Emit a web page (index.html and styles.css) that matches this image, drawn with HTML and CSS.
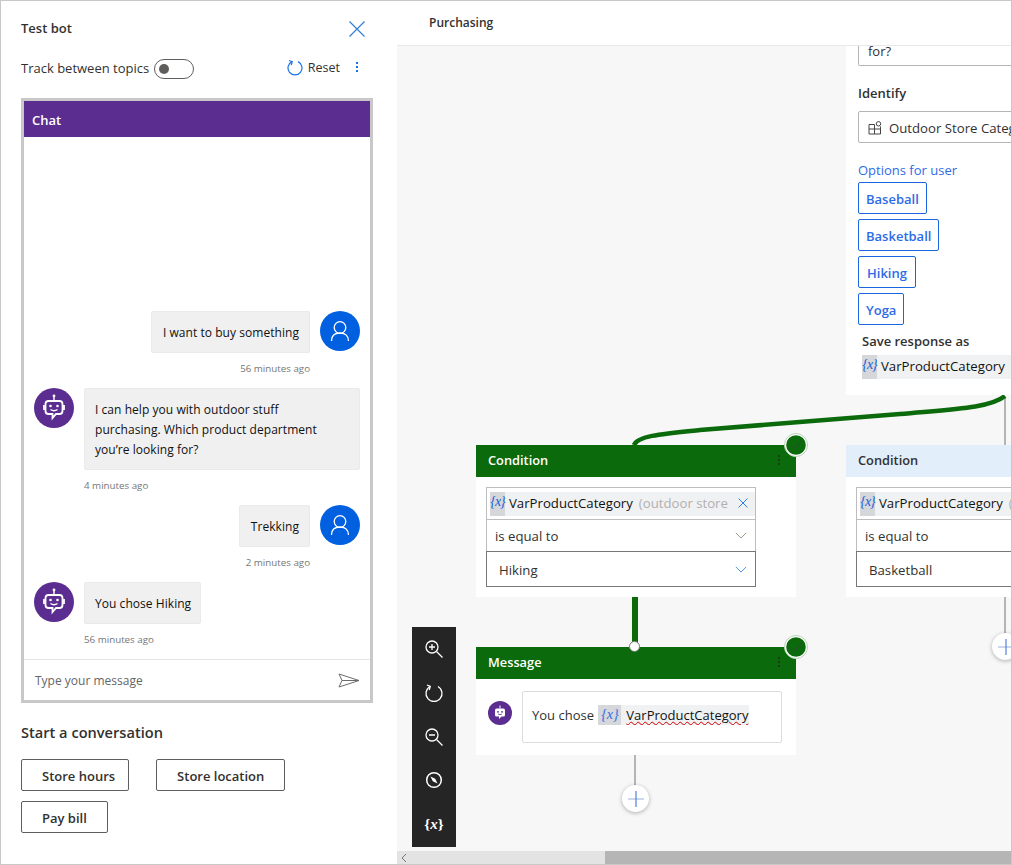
FILE: index.html
```html
<!DOCTYPE html>
<html lang="en">
<head>
    <meta charset="UTF-8">
    <title>Test bot - Purchasing</title>
    <link rel="stylesheet" href="styles.css">
</head>
<body>
    <svg class="defs" width="0" height="0" aria-hidden="true">
        <symbol id="bot" viewBox="0 0 40 40">
            <circle cx="20" cy="20" r="20" fill="#5c2d91"/>
            <path d="M20 8.500v4.500" stroke="#fff" stroke-width="1.400" fill="none"/>
            <circle cx="20" cy="8" r="1.400" fill="#fff"/>
            <path d="M14.500 13h11a3 3 0 0 1 3 3v7a3 3 0 0 1-3 3h-3.500l-3.500 4v-4h-4a3 3 0 0 1-3-3v-7a3 3 0 0 1 3-3z" fill="none" stroke="#fff" stroke-width="1.800"/>
            <path d="M10 17v5M30 17v5" stroke="#fff" stroke-width="1.800" fill="none"/>
            <circle cx="16.500" cy="18" r="1.300" fill="#fff"/>
            <circle cx="23.500" cy="18" r="1.300" fill="#fff"/>
            <path d="M16.500 21.500q3.500 2.500 7 0" stroke="#fff" stroke-width="1.300" fill="none"/>
        </symbol>
        <symbol id="bot-solid" viewBox="0 0 24 24">
            <circle cx="12" cy="12" r="12" fill="#5c2d91"/>
            <path d="M12 4.500v3" stroke="#fff" stroke-width="1" fill="none"/>
            <path d="M8.500 7.500h7a1.500 1.500 0 0 1 1.500 1.500v5a1.500 1.500 0 0 1-1.500 1.500h-2L11 18v-2.500H8.500A1.500 1.500 0 0 1 7 14V9a1.500 1.500 0 0 1 1.500-1.500z" fill="#fff"/>
            <circle cx="10" cy="10.800" r="0.900" fill="#5c2d91"/>
            <circle cx="14" cy="10.800" r="0.900" fill="#5c2d91"/>
            <path d="M10 13q2 1.300 4 0" stroke="#5c2d91" stroke-width="0.800" fill="none"/>
        </symbol>
        <symbol id="user" viewBox="0 0 40 40">
            <circle cx="20" cy="20" r="20" fill="#0060e0"/>
            <circle cx="20" cy="16.500" r="5.800" fill="none" stroke="#fff" stroke-width="1.300"/>
            <path d="M11.500 30c0-5.500 3.500-8 8.500-8s8.500 2.500 8.500 8" fill="none" stroke="#fff" stroke-width="1.300"/>
        </symbol>
        <symbol id="check" viewBox="0 0 24 24">
            <circle cx="12" cy="12" r="11.500" fill="#fff" stroke="#b9d3b9" stroke-width="1"/>
            <circle cx="12" cy="12" r="9.800" fill="#0b6a0b"/>
            <path d="M6.500 12.500l4 4 7.500-9" fill="none" stroke="#2f4a2f" stroke-width="1"/>
        </symbol>
        <symbol id="chevron" viewBox="0 0 14 8">
            <path d="M1 1l6 6 6-6" fill="none" stroke="currentColor" stroke-width="1"/>
        </symbol>
    </svg>

    <div class="app">
        <aside class="test-panel">
            <div class="panel-title">
                <h1>Test bot</h1>
                <svg class="close-icon" width="16" height="16" viewBox="0 0 16 16"><path d="M0.500 0.500l15 15M15.500 0.500l-15 15" stroke="#2f7fd8" stroke-width="1.200" fill="none"/></svg>
            </div>
            <div class="panel-tools">
                <span class="track-label">Track between topics</span>
                <span class="toggle"><span class="toggle-knob"></span></span>
                <span class="reset">
                    <svg width="16" height="17" viewBox="0 0 16 17"><path d="M5 2.600A7 7 0 1 0 11 2.600" fill="none" stroke="#1a73e8" stroke-width="1.200"/><path d="M2 1.500l3.200 1.100L4.300 6" fill="none" stroke="#1a73e8" stroke-width="1.200"/></svg>
                    Reset
                </span>
                <span class="kebab"><i></i><i></i><i></i></span>
            </div>

            <section class="chat">
                <div class="chat-head">Chat</div>
                <div class="chat-log">
                    <div class="msg msg-user">
                        <div class="bubble">I want to buy something</div>
                        <svg class="avatar"><use href="#user"/></svg>
                    </div>
                    <div class="stamp stamp-user">56 minutes ago</div>
                    <div class="msg">
                        <svg class="avatar"><use href="#bot"/></svg>
                        <div class="bubble bubble-wide">I can help you with outdoor stuff purchasing. Which product department you’re looking for?</div>
                    </div>
                    <div class="stamp">4 minutes ago</div>
                    <div class="msg msg-user">
                        <div class="bubble">Trekking</div>
                        <svg class="avatar"><use href="#user"/></svg>
                    </div>
                    <div class="stamp stamp-user">2 minutes ago</div>
                    <div class="msg">
                        <svg class="avatar"><use href="#bot"/></svg>
                        <div class="bubble">You chose Hiking</div>
                    </div>
                    <div class="stamp">56 minutes ago</div>
                </div>
                <div class="chat-input">
                    <span>Type your message</span>
                    <svg width="22" height="15" viewBox="0 0 22 15"><path d="M1 1l20 6.500L1 14l3-6.500zM4 7.500h17" fill="none" stroke="#6b6b6b" stroke-width="1"/></svg>
                </div>
            </section>

            <h2 class="starters-title">Start a conversation</h2>
            <div class="starters">
                <button class="starter starter-tight">Store hours</button>
                <button class="starter">Store location</button>
                <button class="starter">Pay bill</button>
            </div>
        </aside>

        <main class="editor">
            <header class="editor-head">Purchasing</header>
            <div class="canvas">
                <svg class="wires" width="614" height="805" viewBox="397 46 614 805">
                    <path d="M1005 397V445M1005 597V635M635 755V786" stroke="#b5b5b5" stroke-width="2" fill="none"/>
                    <path d="M634 445C637 436 660 434 700 430L900 414C955 409 990 408 1005 396" stroke="#0b6a0b" stroke-width="4.500" fill="none"/>
                    <path d="M635 597V646" stroke="#0b6a0b" stroke-width="6" fill="none"/>
                </svg>

                <div class="node node-question">
                    <div class="q-text">for?</div>
                    <div class="q-label">Identify</div>
                    <div class="q-select">
                        <svg width="14" height="14" viewBox="0 0 14 14"><path d="M1 3.500h5.500V13H1zM1 8h11.500M6.500 8v5h6V5.500" fill="none" stroke="#444" stroke-width="1"/><circle cx="10.500" cy="2.800" r="2.200" fill="none" stroke="#444" stroke-width="1"/></svg>
                        <span>Outdoor Store Category</span>
                    </div>
                    <div class="q-options-label">Options for user</div>
                    <div class="q-options">
                        <span class="q-option">Baseball</span>
                        <span class="q-option">Basketball</span>
                        <span class="q-option q-option-wide">Hiking</span>
                        <span class="q-option">Yoga</span>
                    </div>
                    <div class="q-save">Save response as</div>
                    <div class="chip chip-save"><span class="chip-x">{x}</span><span class="chip-name">VarProductCategory</span></div>
                </div>

                <div class="node node-condition node-left node-active">
                    <div class="node-head">Condition<span class="kebab kebab-dark"><i></i><i></i><i></i></span></div>
                    <div class="node-body">
                        <div class="cond-field cond-var">
                            <div class="chip"><span class="chip-x">{x}</span><span class="chip-name">VarProductCategory</span><span class="chip-type">(outdoor store</span><svg class="chip-close" width="10" height="10" viewBox="0 0 10 10"><path d="M0.500 0.500l9 9M9.500 0.500l-9 9" stroke="#2f7fd8" stroke-width="1" fill="none"/></svg></div>
                        </div>
                        <div class="cond-field cond-op">is equal to<svg class="chevron chevron-grey"><use href="#chevron"/></svg></div>
                        <div class="cond-field cond-val">Hiking<svg class="chevron chevron-blue"><use href="#chevron"/></svg></div>
                    </div>
                </div>

                <div class="node node-condition node-right">
                    <div class="node-head">Condition</div>
                    <div class="node-body">
                        <div class="cond-field cond-var">
                            <div class="chip"><span class="chip-x">{x}</span><span class="chip-name">VarProductCategory</span><span class="chip-type">(outdoor store</span></div>
                        </div>
                        <div class="cond-field cond-op">is equal to</div>
                        <div class="cond-field cond-val">Basketball</div>
                    </div>
                </div>

                <div class="node node-message node-active">
                    <div class="node-head">Message<span class="kebab kebab-dark"><i></i><i></i><i></i></span></div>
                    <div class="message-body">
                        <svg class="message-bot"><use href="#bot-solid"/></svg>
                        <div class="message-box">You chose <span class="inline-var"><span class="chip-x">{x}</span><span class="inline-name">VarProductCategory</span></span></div>
                    </div>
                </div>

                <svg class="status status-left"><use href="#check"/></svg>
                <svg class="status status-message"><use href="#check"/></svg>
                <span class="joint"></span>
                <span class="add add-message"><svg width="16" height="16" viewBox="0 0 16 16"><path d="M0 8h16" stroke="#aebde6" stroke-width="1.200"/><path d="M8 0v16" stroke="#4f80e0" stroke-width="1.200"/></svg></span>
                <span class="add add-right"><svg width="16" height="16" viewBox="0 0 16 16"><path d="M0 8h16" stroke="#aebde6" stroke-width="1.200"/><path d="M8 0v16" stroke="#4f80e0" stroke-width="1.200"/></svg></span>

                <nav class="zoom-bar">
                    <svg width="20" height="20" viewBox="0 0 20 20"><circle cx="8" cy="8" r="6" fill="none" stroke="#fff" stroke-width="1.300"/><path d="M12.500 12.500l6 6M5 8h6M8 5v6" stroke="#fff" stroke-width="1.300"/></svg>
                    <svg width="20" height="20" viewBox="0 0 20 20"><path d="M6 3.500A8 8 0 1 0 14 3.500" fill="none" stroke="#fff" stroke-width="1.300"/><path d="M3 2l3.300 1.300L5.200 7" fill="none" stroke="#fff" stroke-width="1.300"/></svg>
                    <svg width="20" height="20" viewBox="0 0 20 20"><circle cx="8" cy="8" r="6" fill="none" stroke="#fff" stroke-width="1.300"/><path d="M12.500 12.500l6 6M5 8h6" stroke="#fff" stroke-width="1.300"/></svg>
                    <svg width="20" height="20" viewBox="0 0 20 20"><circle cx="10" cy="10" r="7.300" fill="none" stroke="#fff" stroke-width="1.500"/><path d="M6.500 6.500L11.200 8.800 13.500 13.500 8.800 11.200z" fill="#fff"/></svg>
                    <span class="zoom-var">{<i>x</i>}</span>
                </nav>
            </div>
            <div class="hscroll">
                <span class="hscroll-track"><svg width="6" height="10" viewBox="0 0 6 10"><path d="M5 1L1 5l4 4" fill="none" stroke="#777" stroke-width="1"/></svg></span>
                <span class="hscroll-thumb"></span>
            </div>
        </main>
    </div>
</body>
</html>
```

FILE: styles.css
```css
* {
    box-sizing: border-box;
}
body {
    margin: 0;
    font-family: "Open Sans", "Noto Sans", sans-serif;
    color: #323130;
    background-color: #fff;
}
.defs {
    position: absolute;
}
.app {
    display: flex;
    width: 1012px;
    height: 865px;
    border: 1px solid #c8c8c8;
    overflow: hidden;
}

/* test bot panel */
.test-panel {
    width: 396px;
    flex: none;
    padding: 0 24px 0 20px;
}
.panel-title {
    display: flex;
    justify-content: space-between;
    align-items: center;
    height: 54px;
    padding: 2px 8px 0 0;
}
.panel-title h1 {
    margin: -2px 0 0;
    font-size: 13px;
    font-weight: 600;
}
.panel-tools {
    display: flex;
    align-items: center;
    height: 27px;
    font-size: 13px;
}
.track-label {
    margin-top: -2px;
}
.toggle {
    width: 40px;
    height: 20px;
    margin: 1px 0 0 5px;
    padding: 4px;
    border: 1px solid #605e5c;
    border-radius: 10px;
}
.toggle-knob {
    display: block;
    width: 10px;
    height: 10px;
    border-radius: 50%;
    background-color: #605e5c;
}
.reset {
    display: flex;
    align-items: center;
    gap: 5px;
    margin: -3px 0 0 auto;
    font-size: 12.500px;
}
.kebab {
    display: inline-flex;
    flex-direction: column;
    gap: 2px;
    margin: -3px 15px 0 16px;
}
.kebab i {
    width: 2px;
    height: 2px;
    background-color: #1a73e8;
}
.kebab-dark {
    position: absolute;
    right: 16px;
    top: 10px;
    margin: 0;
}
.kebab-dark i {
    background-color: #1d3a1d;
}

/* chat */
.chat {
    display: flex;
    flex-direction: column;
    width: 352px;
    height: 605px;
    margin-top: 16px;
    border: 3px solid #c8c8c8;
}
.chat-head {
    height: 36px;
    padding-left: 8px;
    background-color: #5c2d91;
    color: #fff;
    font-size: 13px;
    font-weight: 600;
    line-height: 38px;
}
.chat-log {
    display: flex;
    flex: 1;
    flex-direction: column;
    justify-content: flex-end;
    padding: 0 10px;
}
.msg {
    display: flex;
    align-items: flex-start;
    gap: 10px;
}
.msg-user {
    justify-content: flex-end;
}
.avatar {
    width: 40px;
    height: 40px;
    flex: none;
}
.bubble {
    padding: 11px 9px 9px 10px;
    border: 1px solid #eaeaea;
    border-radius: 2px;
    background-color: #f0f0f0;
    color: #111;
    font-size: 12px;
    letter-spacing: 0.05px;
    line-height: 20px;
}
.msg-user .bubble {
    padding: 11px 10px 9px 11px;
}
.bubble-wide {
    flex: 1;
    padding-right: 30px;
}
.stamp {
    height: 35px;
    margin-left: 50px;
    padding-top: 9px;
    color: #767676;
    font-size: 9.750px;
    line-height: 14px;
}
.stamp-user {
    margin: 0 50px 0 0;
    text-align: right;
}
.chat-input {
    display: flex;
    justify-content: space-between;
    align-items: center;
    height: 41px;
    padding: 0 10px 0 11px;
    border-top: 1px solid #e4e4e4;
    color: #666;
    font-size: 12px;
}
.starters-title {
    margin: 19px 0 17px;
    font-size: 14.600px;
    font-weight: 600;
    line-height: 20px;
}
.starters {
    display: flex;
    flex-wrap: wrap;
    gap: 10px 27px;
    width: 300px;
}
.starter {
    height: 32px;
    padding: 2px 20px 0;
    border: 1px solid #605e5c;
    border-radius: 2px;
    background-color: #fff;
    color: #323130;
    font-family: inherit;
    font-size: 13px;
    font-weight: 600;
}
.starter-tight {
    padding-right: 13px;
}

/* editor */
.editor {
    display: flex;
    flex: 1;
    flex-direction: column;
    min-width: 0;
}
.editor-head {
    height: 45px;
    flex: none;
    padding: 13px 0 0 32px;
    border-bottom: 1px solid #e8e8e8;
    font-size: 12px;
    font-weight: 600;
}
.canvas {
    position: relative;
    flex: 1;
    overflow: hidden;
    background-color: #f7f7f7;
}
.wires {
    position: absolute;
    left: 0;
    top: 0;
}
.node {
    position: absolute;
    background-color: #fff;
}
.node-head {
    position: relative;
    height: 32px;
    padding-left: 12px;
    font-size: 12.800px;
    font-weight: 600;
    line-height: 30px;
}
.node-active .node-head {
    background-color: #0b6a0b;
    color: #fff;
}
.node-condition {
    top: 399px;
    height: 152px;
}
.node-left {
    left: 79px;
    width: 320px;
}
.node-right {
    left: 449px;
    width: 320px;
}
.node-right .node-head {
    background-color: #e3eefb;
}
.node-body {
    padding: 10px;
}
.cond-field {
    position: relative;
    display: flex;
    align-items: center;
    width: 270px;
    height: 32px;
    padding: 0 8px;
    border: 1px solid #bdbdbd;
    border-bottom: 0;
    font-size: 13.200px;
}
.cond-var {
    padding: 0 0 0 3px;
}
.cond-val {
    height: 36px;
    padding: 2px 0 0 12px;
    border: 1px solid #777;
}
.chevron {
    position: absolute;
    right: 8px;
    top: 12px;
    width: 12px;
    height: 7px;
}
.chevron-grey {
    color: #8f8676;
}
.chevron-blue {
    color: #2f7fd8;
    top: 14px;
}
.chip {
    position: relative;
    display: flex;
    align-items: center;
    width: 100%;
    height: 24px;
    overflow: hidden;
    background-color: #f0f1f3;
    color: #111;
    font-size: 13.200px;
    line-height: 22px;
    white-space: nowrap;
}
.chip-x {
    width: 15px;
    height: 100%;
    flex: none;
    background-color: #d6d7db;
    color: #1a5fd8;
    font-family: "Liberation Serif", serif;
    font-size: 14px;
    font-style: italic;
    letter-spacing: -1px;
    line-height: 20px;
    text-align: center;
}
.chip-name {
    margin: -2px 0 0 4px;
    color: #111;
}
.chip-type {
    margin: -2px 0 0 6px;
    color: #b0b0b0;
}
.chip-close {
    position: absolute;
    right: 7px;
    top: 6px;
}
.node-question {
    left: 449px;
    top: 0;
    width: 320px;
    height: 349px;
    padding: 0 12px;
    font-size: 13px;
}
.q-text {
    height: 20px;
    padding-left: 9px;
    border: 1px solid #b5b5b5;
    border-top: 0;
    border-radius: 0 0 2px 2px;
    line-height: 11px;
}
.q-label {
    margin-top: 18px;
    font-weight: 600;
    line-height: 18px;
}
.q-select {
    display: flex;
    align-items: center;
    gap: 7px;
    height: 32px;
    margin-top: 9px;
    padding: 1px 0 0 9px;
    border: 1px solid #b5b5b5;
    border-radius: 2px;
    font-size: 13.200px;
    white-space: nowrap;
}
.q-options-label {
    margin-top: 18px;
    color: #2e6be6;
    line-height: 18px;
}
.q-options {
    display: flex;
    flex-direction: column;
    align-items: flex-start;
    gap: 5px;
    margin-top: 3px;
}
.q-option {
    height: 32px;
    padding: 0 7px;
    border: 1px solid #1a66e0;
    border-radius: 2px;
    color: #2e6be6;
    font-weight: 600;
    line-height: 32px;
}
.q-option-wide {
    padding: 0 8px;
}
.q-save {
    margin: 7px 0 0 4px;
    font-weight: 600;
    line-height: 18px;
}
.chip-save {
    margin: 5px 0 0 4px;
}
.node-message {
    left: 79px;
    top: 601px;
    width: 320px;
    height: 108px;
}
.message-body {
    display: flex;
    align-items: flex-start;
    padding: 12px 14px 0 12px;
}
.message-bot {
    width: 24px;
    height: 24px;
    flex: none;
    margin: 10px 10px 0 0;
}
.message-box {
    flex: 1;
    height: 52px;
    padding: 13px 9px;
    border: 1px solid #dcdcdc;
    border-radius: 2px;
    font-size: 13px;
    line-height: 20px;
}
.inline-var {
    display: inline-flex;
    width: 151px;
    height: 20px;
    margin-left: 1px;
    overflow: hidden;
    vertical-align: top;
    background-color: #f0f1f3;
    white-space: nowrap;
}
.inline-var .chip-x {
    width: 23px;
    color: #2e6be6;
    letter-spacing: 0;
}
.inline-name {
    margin-left: 5px;
    color: #111;
    text-decoration: underline wavy #d00000 1px;
}
.status {
    position: absolute;
    width: 24px;
    height: 24px;
}
.status-left {
    left: 387px;
    top: 387px;
}
.status-message {
    left: 387px;
    top: 589px;
}
.joint {
    position: absolute;
    left: 232px;
    top: 595px;
    width: 11px;
    height: 11px;
    border: 1px solid #777;
    border-radius: 50%;
    background-color: #fff;
}
.add {
    position: absolute;
    display: flex;
    justify-content: center;
    align-items: center;
    width: 27px;
    height: 27px;
    border-radius: 50%;
    background-color: #fff;
    box-shadow: 0 1px 4px rgba(0, 0, 0, 0.3);
}
.add-message {
    left: 225px;
    top: 739px;
}
.add-right {
    left: 595px;
    top: 587px;
}
.zoom-bar {
    position: absolute;
    left: 15px;
    top: 581px;
    display: flex;
    flex-direction: column;
    justify-content: space-between;
    align-items: center;
    width: 44px;
    height: 220px;
    padding: 12px 0 13px;
    background-color: #252525;
}
.zoom-var {
    color: #fff;
    font-family: "Liberation Serif", serif;
    font-size: 15px;
    font-weight: 700;
    line-height: 20px;
}
.hscroll {
    display: flex;
    height: 13px;
    flex: none;
}
.hscroll-track {
    display: flex;
    align-items: center;
    width: 208px;
    padding-left: 4px;
    background-color: #e3e3e3;
}
.hscroll-thumb {
    flex: 1;
    background-color: #b5b5b5;
}
```
